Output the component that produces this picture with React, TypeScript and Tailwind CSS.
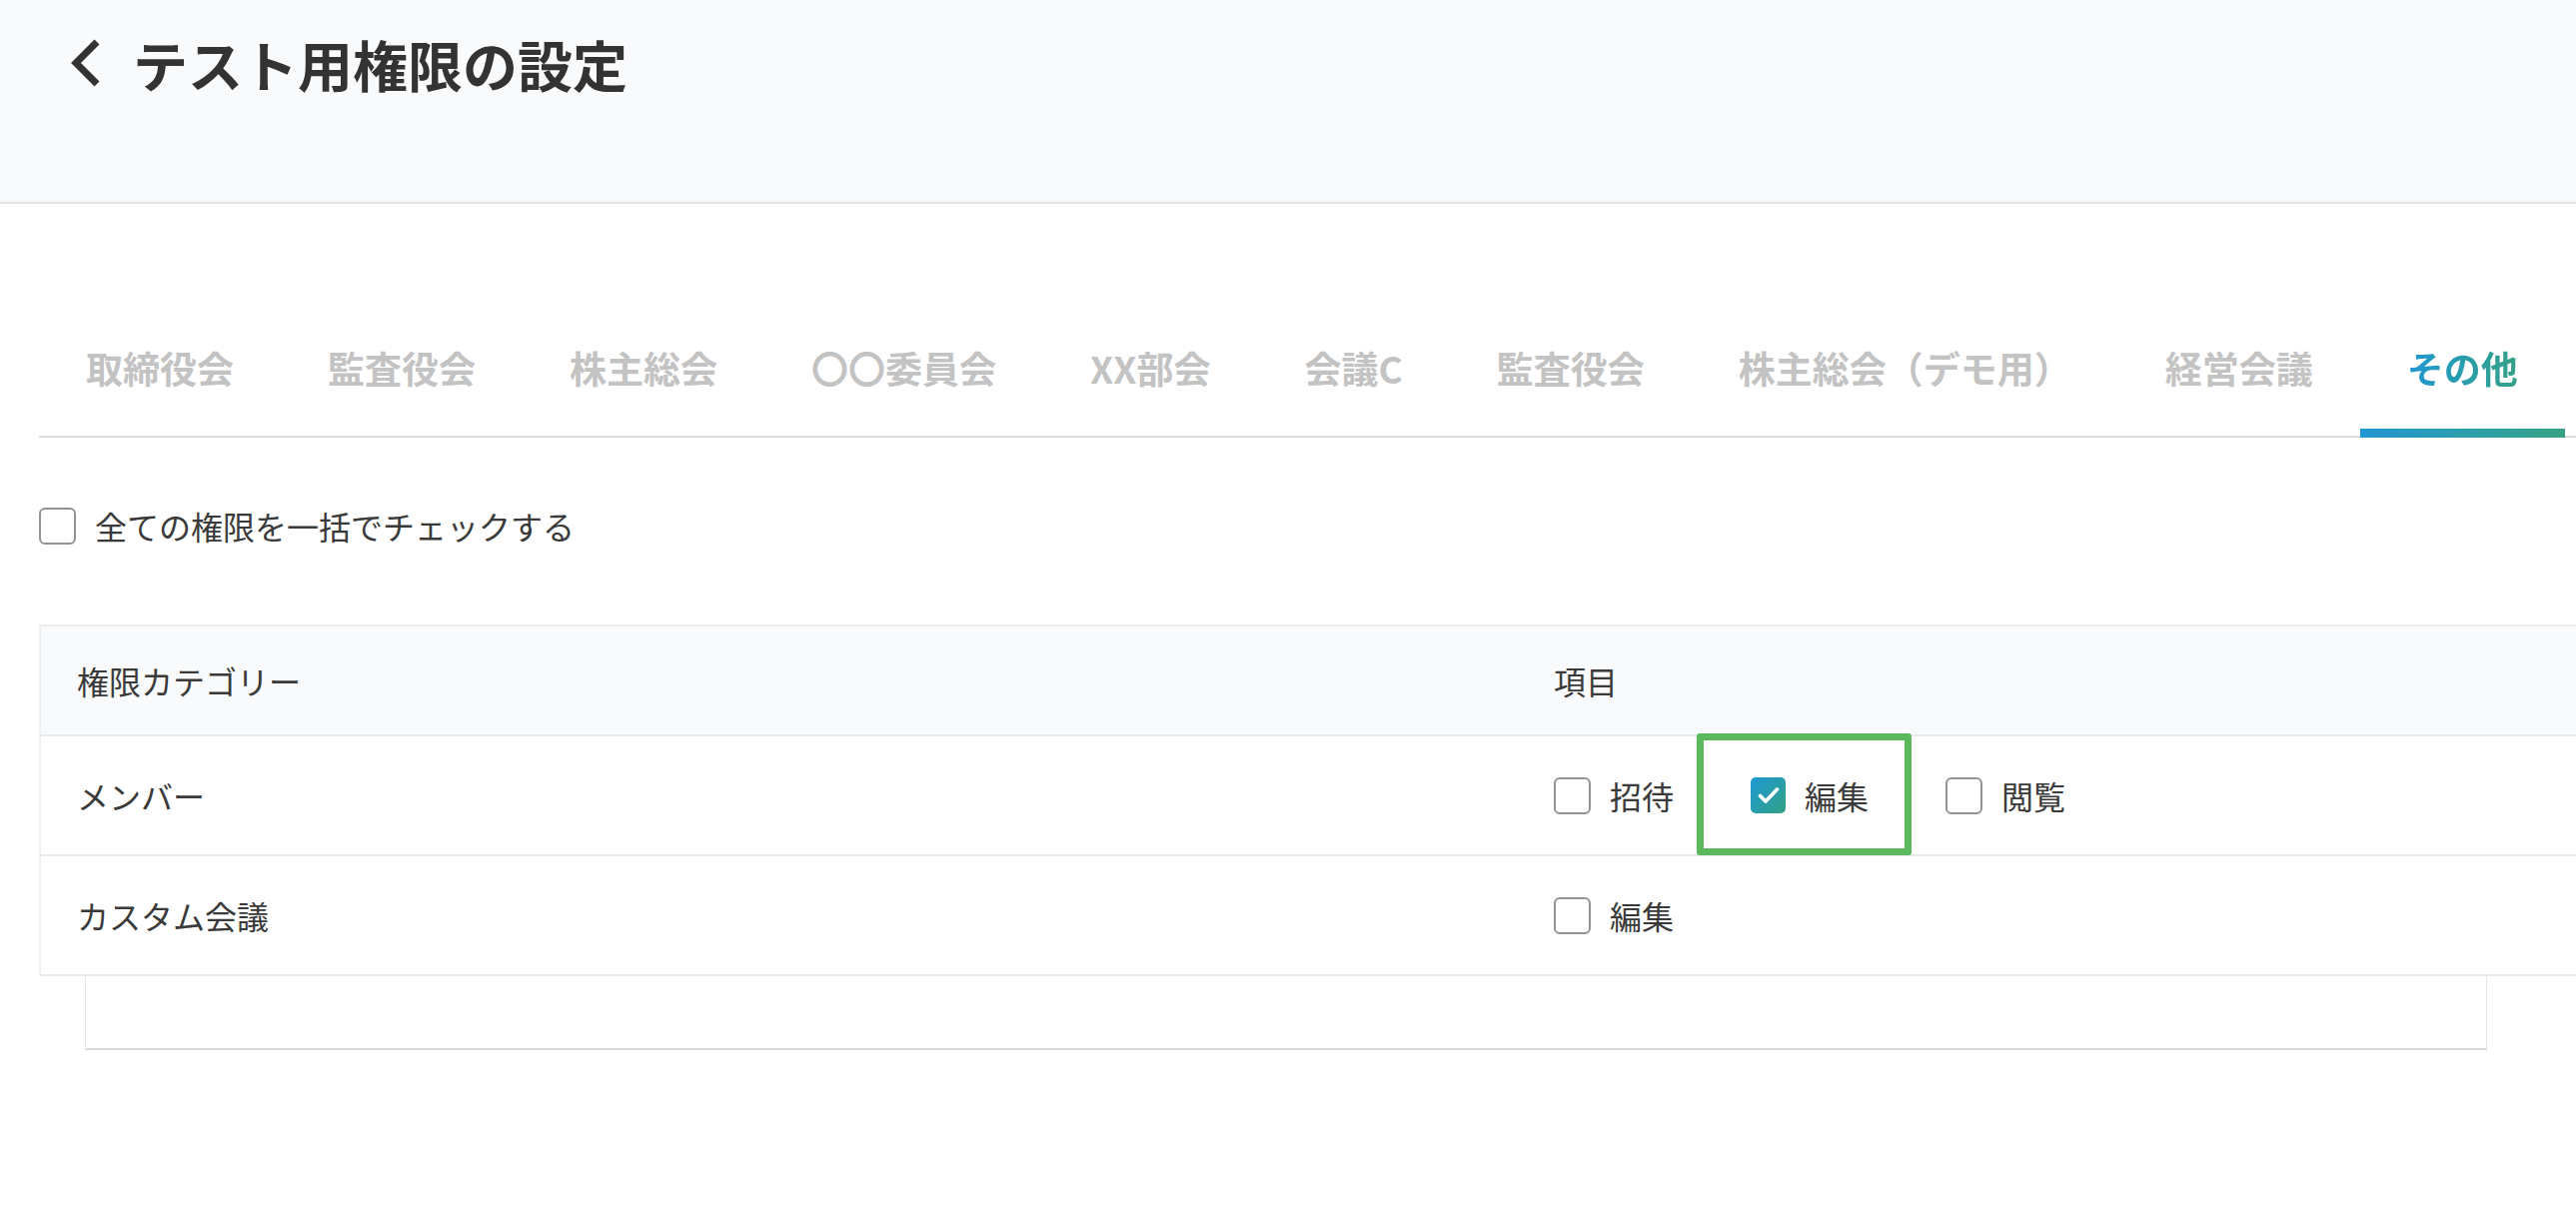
import React, { useState } from 'react';

const TABS = [
  '取締役会',
  '監査役会',
  '株主総会',
  '〇〇委員会',
  'XX部会',
  '会議C',
  '監査役会',
  '株主総会（デモ用）',
  '経営会議',
  'その他',
];

interface Perm { label: string; items: { key: string; label: string; checked: boolean; highlight?: boolean }[] }

const PERMS: Perm[] = [
  {
    label: 'メンバー',
    items: [
      { key: 'invite', label: '招待', checked: false },
      { key: 'edit', label: '編集', checked: true, highlight: true },
      { key: 'view', label: '閲覧', checked: false },
    ],
  },
  {
    label: 'カスタム会議',
    items: [{ key: 'edit', label: '編集', checked: false }],
  },
];

function Box({ checked }: { checked: boolean }) {
  if (checked) {
    return (
      <span className="w-[35px] h-[36px] shrink-0 rounded-[5px] bg-linear-to-br from-[#2198d3] to-[#33a084] flex items-center justify-center">
        <svg width="24" height="20" viewBox="0 0 24 20" fill="none">
          <path d="M3.5 10.5l5.5 5.5L20.5 4" stroke="#fff" strokeWidth="3.6" strokeLinecap="round" strokeLinejoin="round" />
        </svg>
      </span>
    );
  }
  return <span className="w-[37px] h-[37px] shrink-0 rounded-[6px] border-2 border-[#939393] bg-white" />;
}

export default function App() {
  const [active, setActive] = useState(9);

  return (
    <div className="min-h-screen bg-white text-[#3a3a3a] font-['Noto_Sans_CJK_JP','Noto_Sans',sans-serif]">
      {/* ヘッダー */}
      <header className="h-[204px] bg-[#f9fafc] border-b-2 border-[#e2e4e7]">
        <div className="h-[126px] flex items-center pl-[69px]">
          <svg width="34" height="50" viewBox="0 0 34 50" fill="none" className="shrink-0">
            <path d="M28 4L7 25l21 21" stroke="#333" strokeWidth="7" strokeLinejoin="miter" />
          </svg>
          <h1 className="ml-[30px] text-[55px] leading-none font-bold text-[#333]">テスト用権限の設定</h1>
        </div>
      </header>

      <main className="pl-[39px]">
        {/* タブ */}
        <nav className="mt-[97px] flex border-b-2 border-[#dcdcdc]">
          {TABS.map((t, i) => {
            const isActive = i === active;
            return (
              <button
                key={i}
                onClick={() => setActive(i)}
                className="relative px-[47px] pt-[40px] pb-[40px] text-[37px] leading-[55px] font-bold whitespace-nowrap"
              >
                <span className={isActive ? 'bg-linear-to-r from-[#2196d3] to-[#35a184] bg-clip-text text-transparent' : 'text-[#c3c3c3]'}>
                  {t}
                </span>
                {isActive && (
                  <span className="absolute left-0 right-0 bottom-[-2px] h-[9px] bg-linear-to-r from-[#2397d4] to-[#37a283]" />
                )}
              </button>
            );
          })}
        </nav>

        {/* 一括チェック */}
        <label className="mt-[70px] flex items-center gap-[19px] text-[32px] leading-[37px]">
          <Box checked={false} />
          <span>全ての権限を一括でチェックする</span>
        </label>

        {/* 権限テーブル */}
        <div className="mt-[80px] border-l-2 border-t-2 border-[#eceef0]">
          <div className="grid grid-cols-[1476px_1fr] h-[110px] items-center bg-[#f9fafb] border-b-2 border-[#e8e9eb] text-[32px]">
            <div className="pl-[36px]">権限カテゴリー</div>
            <div className="pl-[38px]">項目</div>
          </div>
          {PERMS.map((p) => (
            <div key={p.label} className="grid grid-cols-[1476px_1fr] h-[120px] items-center border-b-2 border-[#e8e9eb] text-[32px]">
              <div className="pl-[36px]">{p.label}</div>
              <div className="pl-[38px] flex items-center gap-[77px]">
                {p.items.map((it) => (
                  <span key={it.key} className="relative flex items-center gap-[19px] leading-[37px]">
                    <Box checked={it.checked} />
                    <span>{it.label}</span>
                    {it.highlight && (
                      <span className="absolute left-[-54px] right-[-43px] top-[-44px] bottom-[-41px] border-[7px] border-[#5cb85c] rounded-[3px]" />
                    )}
                  </span>
                ))}
              </div>
            </div>
          ))}
        </div>
        <div className="ml-[46px] w-[2404px] h-[74px] border-x border-b-2 border-x-[#e6e6e6] border-b-[#d8d8d8]" />
      </main>
    </div>
  );
}
